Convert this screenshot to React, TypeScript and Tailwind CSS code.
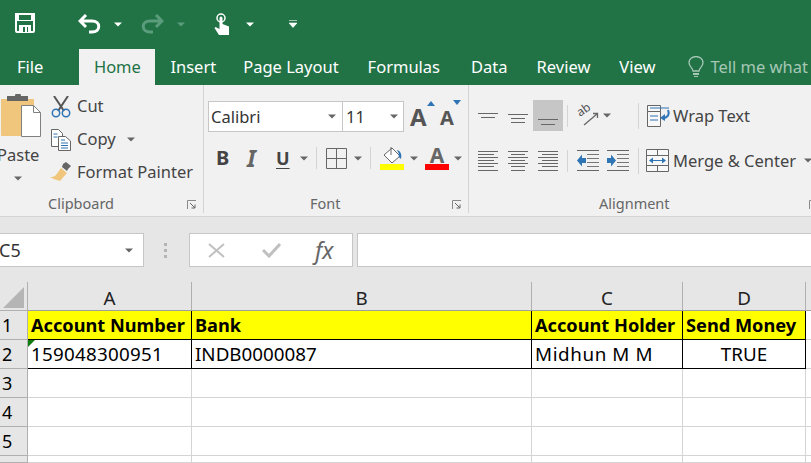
import React from "react";

const Caret = ({ c = "#666", cls = "" }: { c?: string; cls?: string }) => (
  <svg width="8" height="5" viewBox="0 0 8 5" className={"shrink-0 " + cls}><path d="M0 0.5h8L4 4.5z" fill={c} /></svg>
);

const Lines = ({ rows, w = 20, h = 20 }: { rows: [number, number, number][]; w?: number; h?: number }) => (
  <svg width={w} height={h} viewBox={`0 0 ${w} ${h}`} className="shrink-0">
    {rows.map(([y, a, b], i) => <rect key={i} x={a} y={y} width={b - a} height="1" fill="#666" />)}
  </svg>
);

const Tab = ({ t, cls = "" }: { t: string; cls?: string }) => <span className={"text-[16.5px] leading-[36px] text-white " + cls}>{t}</span>;

const Sep = ({ cls = "" }: { cls?: string }) => <div className={"w-px bg-[#d4d4d4] shrink-0 " + cls} />;

const Launcher = ({ cls = "right-[6px]" }: { cls?: string }) => (
  <svg width="10" height="10" viewBox="0 0 10 10" className={"absolute bottom-[3px] " + cls}>
    <path d="M0.5 9V0.5H9" fill="none" stroke="#8a8a8a" />
    <path d="M3 3l5 5M8 4.5V8H4.5" fill="none" stroke="#666" />
  </svg>
);

const alignLines = {
  left: [[0, 0, 20], [3, 0, 16], [6, 0, 20], [9, 0, 16], [12, 0, 20], [15, 0, 16], [19, 0, 20]] as [number, number, number][],
  center: [[0, 0, 20], [3, 3, 17], [6, 0, 20], [9, 3, 17], [12, 0, 20], [15, 3, 17], [19, 3, 17]] as [number, number, number][],
  right: [[0, 0, 20], [3, 4, 20], [6, 0, 20], [9, 4, 20], [12, 0, 20], [15, 4, 20], [19, 0, 20]] as [number, number, number][],
};

const Indent = ({ flip }: { flip?: boolean }) => (
  <svg width="22" height="21" viewBox="0 0 22 21" className="shrink-0">
    <path d="M0 0.5h22M0 20.5h22" stroke="#666" />
    <path d="M10 4.5h12M10 8.5h12M10 12.5h12M10 16.5h12" stroke="#777" />
    {flip
      ? <path d="M0 8h4V4.5l5 6-5 6V13H0z" fill="#2f75b5" />
      : <path d="M9 8H5V4.5l-5 6 5 6V13h4z" fill="#2f75b5" />}
  </svg>
);

export default function App() {
  return (
    <div className="w-[811px] h-[463px] overflow-hidden bg-white flex flex-col font-['Noto_Sans',sans-serif]">
      {/* Title bar */}
      <div className="h-[85px] bg-[#217346] flex flex-col shrink-0">
        <div className="h-[49px] flex items-center">
          <svg width="20" height="20" viewBox="0 0 20 20" className="ml-[15px] -mt-[3px]">
            <path d="M1 1h18v17a1 1 0 0 1-1 1H2a1 1 0 0 1-1-1z" fill="none" stroke="#fff" strokeWidth="2" />
            <path d="M1 1h18v7H1z" fill="#fff" /><rect x="4" y="2" width="12" height="5" fill="#217346" />
            <path d="M4 12h12v7H4z" fill="#fff" /><rect x="8" y="14" width="2" height="5" fill="#217346" /><rect x="12" y="14" width="1" height="5" fill="#217346" />
          </svg>
          <svg width="23" height="20" viewBox="0 0 23 20" className="ml-[43px] -mt-[1px]">
            <path d="M8 1L2 7l6 6M3 7h11c9 0 9 11 0 11h-3" fill="none" stroke="#fff" strokeWidth="3" />
          </svg>
          <Caret c="#fff" cls="ml-[13px] -mt-[1px]" />
          <svg width="23" height="20" viewBox="0 0 23 20" className="ml-[19px] -mt-[1px]">
            <path d="M15 1l6 6-6 6M20 7H9c-9 0-9 11 0 11h3" fill="none" stroke="#5a9c7c" strokeWidth="3" />
          </svg>
          <Caret c="#5a9c7c" cls="ml-[13px] -mt-[1px]" />
          <svg width="17" height="22" viewBox="0 0 17 22" className="ml-[29px] -mt-[2px]">
            <circle cx="7" cy="5" r="4" fill="none" stroke="#fff" strokeWidth="1.500" />
            <path d="M5.500 5a1.500 1.500 0 0 1 3 0v6l6.500 2.500V22H5L0.500 15l1-1 4 2z" fill="#fff" />
          </svg>
          <Caret c="#fff" cls="ml-[15px] -mt-[1px]" />
          <svg width="8" height="8" viewBox="0 0 8 8" className="ml-[35px] -mt-[1px]">
            <path d="M0 0.500h8M0 3h8L4 7.500z" fill="#fff" stroke="#fff" strokeWidth="0.600" />
          </svg>
        </div>
        <div className="h-[36px] flex items-stretch whitespace-nowrap">
          <Tab t="File" cls="ml-[17px]" />
          <div className="ml-[36px] w-[76px] bg-[#f1f1f1] text-center text-[16.5px] leading-[36px] text-[#217346]">Home</div>
          <Tab t="Insert" cls="ml-[15px]" />
          <Tab t="Page Layout" cls="ml-[27px]" />
          <Tab t="Formulas" cls="ml-[29px]" />
          <Tab t="Data" cls="ml-[31px]" />
          <Tab t="Review" cls="ml-[29px]" />
          <Tab t="View" cls="ml-[29px]" />
          <svg width="16" height="22" viewBox="0 0 16 22" className="ml-[33px] mt-[7px] shrink-0">
            <path d="M5 15c0-3-4-4-4-8.500a7 6 0 0 1 14 0C15 11 11 12 11 15z" fill="none" stroke="#a6c7b5" strokeWidth="1.300" />
            <path d="M5 17h6v2H5z" fill="#a6c7b5" /><path d="M6 20h4v1H6z" fill="#a6c7b5" />
          </svg>
          <span className="ml-[6px] text-[16.5px] leading-[36px] text-[#a6c7b5]">Tell me what</span>
        </div>
      </div>

      {/* Ribbon */}
      <div className="h-[132px] shrink-0 bg-[#f1f1f1] border-b border-[#d4d4d4] flex text-[#444] whitespace-nowrap overflow-hidden">
        {/* Clipboard */}
        <div className="relative w-[204px] shrink-0 border-r border-[#d4d4d4] h-[128px] flex">
          <div className="w-[51px] shrink-0 flex flex-col items-start">
            <svg width="42" height="44" viewBox="0 0 42 44" className="mt-[9px]">
              <path d="M1 5h33v36a1 1 0 0 1-1 1H2a1 1 0 0 1-1-1z" fill="#f0c67c" />
              <path d="M7 2h8a3 3 0 0 1 6 0h7v5H7z" fill="#666" />
              <path d="M21.500 11.500h12l7 7v24h-19z" fill="#fff" stroke="#808080" />
              <path d="M33.500 11.500v7h7" fill="none" stroke="#808080" />
            </svg>
            <div className="-ml-[3px] mt-[5px] text-[16.5px] leading-[24px]">Paste</div>
            <Caret cls="ml-[14px] mt-[9px]" />
          </div>
          <div className="flex flex-col pt-[5px]">
            <div className="h-[33px] flex items-center">
              <svg width="20" height="22" viewBox="0 0 20 22">
                <path d="M3 0l10 15M17 0L7 15" stroke="#555" strokeWidth="2" />
                <circle cx="5" cy="17" r="3.700" fill="none" stroke="#2f75b5" strokeWidth="1.500" />
                <circle cx="15" cy="17" r="3.700" fill="none" stroke="#2f75b5" strokeWidth="1.500" />
              </svg>
              <span className="ml-[6px] text-[16.5px]">Cut</span>
            </div>
            <div className="h-[33px] flex items-center">
              <svg width="20" height="22" viewBox="0 0 20 22">
                <path d="M0.500 0.500h7l4 4v13h-11z" fill="#fff" stroke="#666" />
                <path d="M7.500 7.500h7l5 4.500v9.500h-12z" fill="#fff" stroke="#666" />
                <path d="M2.500 5h4M2.500 8h4M10 11h4M10 14h7M10 16.500h7M10 19h7" stroke="#2f75b5" />
              </svg>
              <span className="ml-[6px] text-[16.5px]">Copy</span>
              <Caret cls="ml-[11px]" />
            </div>
            <div className="h-[32px] flex items-center">
              <svg width="22" height="20" viewBox="0 0 22 20" className="-ml-[1px]">
                <path d="M13 2l3-2 5 4-3 3-1 2-5-4z" fill="#666" />
                <path d="M11 6l6 5-7 8c-3-1-7-2-10-4 2 0 4 0 6-2z" fill="#f0c67c" />
              </svg>
              <span className="ml-[5px] text-[16.5px]">Format Painter</span>
            </div>
          </div>
          <div className="absolute left-[48px] bottom-0 text-[14.5px] leading-[20px] text-[#666]">Clipboard</div>
          <Launcher />
        </div>

        {/* Font */}
        <div className="relative w-[265px] shrink-0 border-r border-[#d4d4d4] h-[128px] pl-[4px] pt-[16px]">
          <div className="flex items-start">
            <div className="w-[135px] h-[31px] bg-white border border-[#c6c6c6] flex items-center pl-[2px] pr-[6px] justify-between">
              <span className="font-['Lato',sans-serif] text-[16.5px] leading-[31px] text-[#333]">Calibri</span><Caret />
            </div>
            <div className="w-[61px] h-[31px] bg-white border border-l-0 border-[#c6c6c6] flex items-center pl-[3px] pr-[5px] justify-between">
              <span className="font-['Lato',sans-serif] text-[16.5px] leading-[31px] text-[#333]">11</span><Caret />
            </div>
            <div className="relative ml-[6px] w-[24px] h-[31px]">
              <span className="font-['Liberation_Sans',sans-serif] text-[24px] leading-[31px] font-bold text-[#555]">A</span>
              <svg width="8" height="5" viewBox="0 0 8 5" className="absolute left-[17px] top-[0px]"><path d="M0 5h8L4 0z" fill="#2f75b5" /></svg>
            </div>
            <div className="relative ml-[6px] w-[24px] h-[31px]">
              <span className="font-['Liberation_Sans',sans-serif] text-[20px] leading-[33px] font-bold text-[#555]">A</span>
              <svg width="8" height="5" viewBox="0 0 8 5" className="absolute left-[13px] top-[-1px]"><path d="M0 0h8L4 5z" fill="#2f75b5" /></svg>
            </div>
          </div>
          <div className="flex items-center h-[30px] mt-[11px]">
            <span className="ml-[8px] w-[16px] font-['Liberation_Sans',sans-serif] text-[20px] font-bold text-[#444]">B</span>
            <span className="ml-[15px] w-[13px] font-['Liberation_Serif',serif] text-[23px] leading-[30px] italic font-bold text-[#666]">I</span>
            <span className="ml-[16px] w-[14px] font-['Liberation_Sans',sans-serif] text-[18px] font-bold text-[#444] underline underline-offset-[3px]">U</span>
            <Caret cls="ml-[10px]" />
            <Sep cls="ml-[8px] h-[22px]" />
            <svg width="21" height="21" viewBox="0 0 21 21" className="ml-[9px]"><path d="M0.500 0.500h20v20h-20zM10.500 0.500v20M0.500 10.500h20" fill="none" stroke="#666" /></svg>
            <Caret cls="ml-[7px]" />
            <Sep cls="ml-[8px] h-[22px]" />
            <div className="ml-[9px] w-[24px] flex flex-col">
              <svg width="24" height="18" viewBox="0 0 24 18">
                <path d="M4 9l8-7 8 8-8 7z" fill="#fff" stroke="#666" />
                <path d="M11 1v8" stroke="#666" /><path d="M17 4c4 1 5 5 4 9-2-1-3-3-2-5z" fill="#2f75b5" />
              </svg>
              <div className="h-[6px] bg-[#ffff00]" />
            </div>
            <Caret cls="ml-[6px]" />
            <div className="ml-[7px] w-[24px] flex flex-col items-center">
              <span className="font-['Liberation_Sans',sans-serif] text-[21px] leading-[18px] font-bold text-[#666]">A</span>
              <div className="w-full h-[6px] bg-[#ff0000]" />
            </div>
            <Caret cls="ml-[5px]" />
          </div>
          <div className="absolute left-[106px] bottom-0 text-[14.5px] leading-[20px] text-[#666]">Font</div>
          <Launcher />
        </div>

        {/* Alignment */}
        <div className="relative flex-1 h-[128px] pt-[15px] pl-[9px]">
          <div className="flex h-[31px] items-center">
            <Lines rows={[[3, 0, 20], [7, 3, 17]]} h={12} />
            <div className="ml-[10px]"><Lines rows={[[9, 0, 20], [13, 3, 17], [17, 3, 17]]} h={22} /></div>
            <div className="ml-[5px] w-[30px] h-[31px] bg-[#c6c6c6] flex items-center justify-center"><Lines rows={[[15, 0, 20], [20, 3, 17]]} h={24} /></div>
            <Sep cls="ml-[4px] h-[22px]" />
            <svg width="20" height="24" viewBox="0 0 20 24" className="ml-[10px] overflow-visible">
              <text x="2" y="13" transform="rotate(-35 2 13)" fontFamily="Noto Sans, sans-serif" fontSize="12" fill="#555">ab</text>
              <path d="M6 21L19 10M15 9.500h4.500V14" fill="none" stroke="#666" strokeWidth="1.300" />
            </svg>
            <Caret cls="ml-[5px]" />
            <Sep cls="ml-[27px] h-[26px]" />
            <svg width="23" height="22" viewBox="0 0 23 22" className="ml-[8px]">
              <path d="M0.500 0.500h13v6h-13zM0.500 6.500h13v15h-13z" fill="#f8f8f8" stroke="#666" />
              <path d="M3 11h8M3 15h8" stroke="#2f75b5" />
              <path d="M3 3h19" stroke="#2f75b5" />
              <path d="M21 5c2 5-1 8-5 8" fill="none" stroke="#2f75b5" strokeWidth="2" /><path d="M18 9l-5 4 5 3z" fill="#2f75b5" />
            </svg>
            <span className="ml-[3px] mt-[2px] text-[16.5px]">Wrap Text</span>
          </div>
          <div className="flex h-[31px] items-center mt-[14px]">
            <Lines rows={alignLines.left} />
            <div className="ml-[10px]"><Lines rows={alignLines.center} /></div>
            <div className="ml-[10px]"><Lines rows={alignLines.right} /></div>
            <Sep cls="ml-[9px] h-[22px]" />
            <div className="ml-[9px]"><Indent /></div>
            <div className="ml-[8px]"><Indent flip /></div>
            <Sep cls="ml-[9px] h-[26px]" />
            <svg width="23" height="23" viewBox="0 0 23 23" className="ml-[7px]">
              <path d="M0.500 0.500h22v22h-22zM0.500 6.500h22M0.500 16.500h22M11.500 0.500v6M11.500 16.500v6" fill="#f8f8f8" stroke="#666" />
              <path d="M4 11.500h15" stroke="#2f75b5" /><path d="M7 8.500L3 11.500l4 3zM16 8.500l4 3-4 3z" fill="#2f75b5" />
            </svg>
            <span className="ml-[4px] mt-[2px] text-[16.5px]">Merge &amp; Center</span>
            <Caret cls="ml-[8px]" />
          </div>
          <div className="absolute left-[130px] bottom-0 text-[14.5px] leading-[20px] text-[#666]">Alignment</div>
          <Launcher cls="-right-[7px]" />
        </div>
      </div>

      {/* Formula bar */}
      <div className="h-[65px] shrink-0 bg-[#e6e6e6] flex pt-[16px] pb-[15px]">
        <div className="w-[144px] h-[34px] bg-white border border-l-0 border-[#c6c6c6] flex items-center justify-between pr-[10px]">
          <span className="text-[18px] text-[#333] -ml-[1px]">C5</span><Caret />
        </div>
        <div className="w-[45px] flex flex-col items-center justify-center gap-[3px] pr-[3px]">
          <div className="w-[3px] h-[3px] bg-[#b5b5b5]" /><div className="w-[3px] h-[3px] bg-[#b5b5b5]" /><div className="w-[3px] h-[3px] bg-[#b5b5b5]" />
        </div>
        <div className="w-[164px] h-[34px] bg-white border border-[#c6c6c6] flex items-center">
          <svg width="17" height="15" viewBox="0 0 17 15" className="ml-[18px]"><path d="M1 1l15 13M16 1L1 14" stroke="#c0c0c0" strokeWidth="2" /></svg>
          <svg width="19" height="16" viewBox="0 0 19 16" className="ml-[37px]"><path d="M1 8l6 6L18 2" fill="none" stroke="#c0c0c0" strokeWidth="3" /></svg>
          <span className="ml-[34px] font-['Liberation_Serif',serif] italic text-[23px] font-normal leading-[30px] text-[#666]">fx</span>
        </div>
        <div className="ml-[4px] flex-1 h-[34px] bg-white border border-r-0 border-[#c6c6c6]" />
      </div>

      {/* Sheet */}
      <div className="grid flex-1 grid-cols-[28px_164px_340px_151px_123px_1fr] grid-rows-[29px_29px_29px_29px_29px_29px] font-['Lato',sans-serif] text-[18.8px] leading-[28px] text-black whitespace-nowrap overflow-hidden">
        <div className="relative bg-[#e6e6e6] border-r border-b border-[#b0b0b0]">
          <svg width="21" height="21" viewBox="0 0 21 21" className="absolute left-[3px] bottom-[2px]"><path d="M21 0v21H0z" fill="#b5b5b5" /></svg>
        </div>
        {["A", "B", "C", "D"].map((c) => (
          <div key={c} className="bg-[#e6e6e6] border-r border-b border-r-[#b0b0b0] border-b-[#9f9f9f] text-center text-[#222] pt-[2px]">{c}</div>
        ))}
        <div className="bg-[#e6e6e6] border-b border-[#9f9f9f]" />

        <div className="bg-[#e6e6e6] border-r border-b border-[#b0b0b0] pl-[2px] text-[18px]">1</div>
        <div className="bg-[#ffff00] border-r border-b border-black pl-[3px] font-bold text-[18.2px]">Account Number</div>
        <div className="bg-[#ffff00] border-r border-b border-black pl-[3px] font-bold text-[18.2px]">Bank</div>
        <div className="bg-[#ffff00] border-r border-b border-black pl-[3px] font-bold text-[18.2px]">Account Holder</div>
        <div className="bg-[#ffff00] border-r border-b border-black pl-[3px] font-bold text-[18.2px]">Send Money</div>
        <div className="border-b border-[#d4d4d4]" />

        <div className="bg-[#e6e6e6] border-r border-b border-[#b0b0b0] pl-[2px] text-[18px]">2</div>
        <div className="relative border-r border-b border-black pl-[3px] tracking-[0.25px]">
          159048300951
          <svg width="7" height="7" viewBox="0 0 7 7" className="absolute left-0 top-0"><path d="M0 0h7L0 7z" fill="#107c10" /></svg>
        </div>
        <div className="border-r border-b border-black pl-[3px]">INDB0000087</div>
        <div className="border-r border-b border-black pl-[3px] tracking-[0.6px]">Midhun M M</div>
        <div className="border-r border-b border-black text-center">TRUE</div>
        <div className="border-b border-[#d4d4d4]" />

        {["3", "4", "5", "6"].map((r) => (
          <React.Fragment key={r}>
            <div className="bg-[#e6e6e6] border-r border-b border-[#b0b0b0] pl-[2px] text-[18px]">{r === "6" ? "" : r}</div>
            <div className="border-r border-b border-[#d4d4d4]" />
            <div className="border-r border-b border-[#d4d4d4]" />
            <div className="border-r border-b border-[#d4d4d4]" />
            <div className="border-r border-b border-[#d4d4d4]" />
            <div className="border-b border-[#d4d4d4]" />
          </React.Fragment>
        ))}
      </div>
    </div>
  );
}
